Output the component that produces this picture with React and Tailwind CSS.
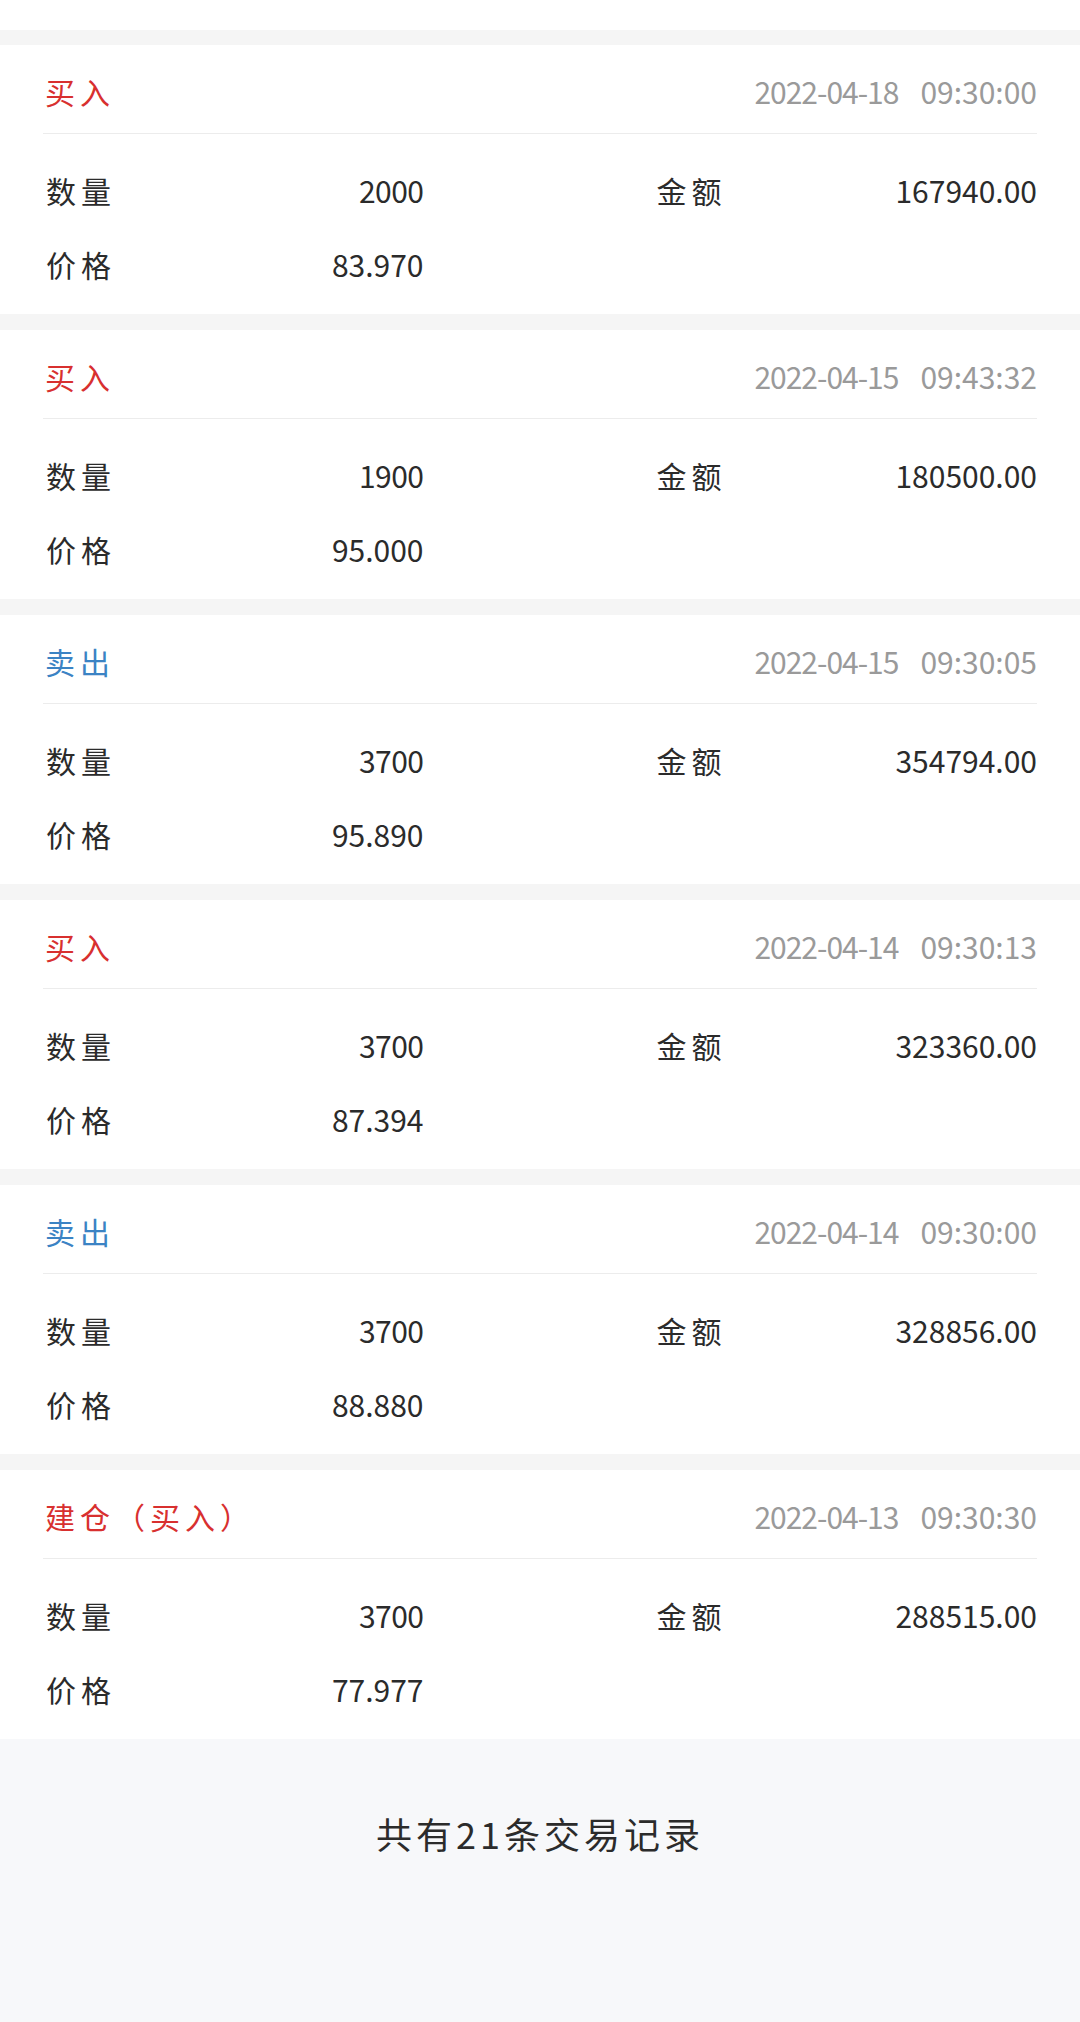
import React from "react";

const trades = [
  { type: "买入", color: "text-[#d8302f]", date: "2022-04-18", time: "09:30:00", qty: "2000", amount: "167940.00", price: "83.970" },
  { type: "买入", color: "text-[#d8302f]", date: "2022-04-15", time: "09:43:32", qty: "1900", amount: "180500.00", price: "95.000" },
  { type: "卖出", color: "text-[#3b83c4]", date: "2022-04-15", time: "09:30:05", qty: "3700", amount: "354794.00", price: "95.890" },
  { type: "买入", color: "text-[#d8302f]", date: "2022-04-14", time: "09:30:13", qty: "3700", amount: "323360.00", price: "87.394" },
  { type: "卖出", color: "text-[#3b83c4]", date: "2022-04-14", time: "09:30:00", qty: "3700", amount: "328856.00", price: "88.880" },
  { type: "建仓（买入）", color: "text-[#d8302f]", date: "2022-04-13", time: "09:30:30", qty: "3700", amount: "288515.00", price: "77.977" },
];

const TradeCard = ({ t }) => {
  return (
    <div className="bg-white h-[269px] px-[43px]">
      {/* header: type + date/time */}
      <div className="h-[89px] pt-[5px] flex items-center justify-between border-b border-[#ececec]">
        <span className={`${t.color} text-[30px] tracking-[5px] pl-[2px]`}>{t.type}</span>
        <span className="flex gap-[22px] text-[#9a9a9a] text-[30px]">
          <span className="tracking-[-1px]">{t.date}</span>
          <span>{t.time}</span>
        </span>
      </div>

      {/* body: two columns */}
      <div className="pt-[19px] grid grid-cols-2 gap-x-[233px] text-[#2b2b2b] text-[30px]">
        <div className="h-[74px] flex items-center justify-between">
          <span className="tracking-[5px] pl-[3px]">数量</span>
          <span className="tracking-[-0.5px]">{t.qty}</span>
        </div>
        <div className="h-[74px] flex items-center justify-between">
          <span className="tracking-[5px]">金额</span>
          <span>{t.amount}</span>
        </div>
        <div className="h-[74px] flex items-center justify-between">
          <span className="tracking-[5px] pl-[3px]">价格</span>
          <span>{t.price}</span>
        </div>
      </div>
    </div>
  );
};

const App = () => {
  return (
    <div
      className="w-[1080px] min-h-[2022px] bg-[#f7f8fa]"
      style={{ fontFamily: '"Noto Sans CJK SC", "Noto Sans", sans-serif' }}
    >
      {/* end of the previous card, scrolled off */}
      <div className="bg-white h-[30px]" />

      <div className="bg-[#f5f5f5] pt-[15px] flex flex-col gap-[16px]">
        {trades.map((t, i) => (
          <TradeCard key={i} t={t} />
        ))}
      </div>

      {/* footer */}
      <div className="h-[188px] flex items-center justify-center text-[#2b2b2b] text-[36px] tracking-[4px]">
        共有21条交易记录
      </div>
    </div>
  );
};

export default App;
